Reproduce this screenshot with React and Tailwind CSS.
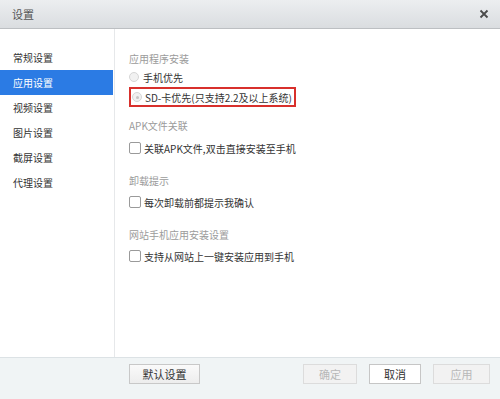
const menu = ["常规设置", "应用设置", "视频设置", "图片设置", "截屏设置", "代理设置"];

const Radio = ({ checked }) => (
    <span className="flex h-[10px] w-[10px] shrink-0 items-center justify-center rounded-full border border-[#d6d6d6] bg-[#f1f1f1]">
        {checked && <span className="h-[3px] w-[3px] rounded-full bg-[#c4c4c4]" />}
    </span>
);

const Checkbox = () => (
    <span className="h-[12px] w-[12px] shrink-0 rounded-[2px] border border-[#9a9a9a] bg-white" />
);

const Heading = ({ children, className = "" }) => (
    <div className={`h-[14px] text-[10px] leading-[14px] text-[#9b9b9b] ${className}`}>{children}</div>
);

const App = () => {
    return (
        <div
            className="flex h-[399px] w-[500px] flex-col bg-white text-[#333]"
            style={{ fontFamily: '"Noto Sans CJK SC", "Noto Sans", sans-serif' }}
        >
            {/* Title bar */}
            <div className="flex h-[29px] shrink-0 items-center justify-between border-b border-[#bcbfc2] bg-gradient-to-b from-[#eceef0] to-[#dadde0] pl-[12px] pr-[8px]">
                <span className="text-[11px] text-[#555]">设置</span>
                <svg width="10" height="10" viewBox="0 0 10 10" className="mr-[3px]">
                    <path d="M1.5 1.5 L8.5 8.5 M8.5 1.5 L1.5 8.5" stroke="#4a4a4a" strokeWidth="1.8" />
                </svg>
            </div>

            {/* Body */}
            <div className="flex flex-1">
                {/* Sidebar */}
                <div className="w-[115px] shrink-0 border-r border-[#e6e8ea] pt-[16px]">
                    {menu.map((item) => (
                        <div
                            key={item}
                            className={`flex h-[25px] items-center pl-[13px] text-[10px] ${
                                item === "应用设置" ? "mr-[1px] bg-[#2b7be4] text-white" : "text-[#333]"
                            }`}
                        >
                            {item}
                        </div>
                    ))}
                </div>

                {/* Content */}
                <div className="flex-1 pl-[14px] pt-[23px] text-[10px]">
                    <Heading>应用程序安装</Heading>
                    <div className="mt-[1px] flex h-[20px] items-center gap-[4px]">
                        <Radio />
                        <span>手机优先</span>
                    </div>
                    <div className="flex h-[20px] w-[167px] items-center gap-[3px] whitespace-nowrap border-2 border-[#d8302c] pl-[1px]">
                        <Radio checked />
                        <span>SD-卡优先(只支持2.2及以上系统)</span>
                    </div>

                    <Heading className="mt-[12px]">APK文件关联</Heading>
                    <div className="mt-[5px] flex h-[20px] items-center gap-[3px]">
                        <Checkbox />
                        <span>关联APK文件,双击直接安装至手机</span>
                    </div>

                    <Heading className="mt-[16px]">卸载提示</Heading>
                    <div className="mt-[4px] flex h-[20px] items-center gap-[3px]">
                        <Checkbox />
                        <span>每次卸载前都提示我确认</span>
                    </div>

                    <Heading className="mt-[16px]">网站手机应用安装设置</Heading>
                    <div className="mt-[4px] flex h-[20px] items-center gap-[3px]">
                        <Checkbox />
                        <span>支持从网站上一键安装应用到手机</span>
                    </div>
                </div>
            </div>

            {/* Footer */}
            <div className="flex h-[42px] shrink-0 items-start justify-between border-t border-[#dce2e5] bg-[#f0f4f5] pl-[129px] pr-[10px] pt-[6px] text-[11px]">
                <button className="h-[20px] w-[71px] border border-[#c8c8c8] bg-gradient-to-b from-[#fafafa] to-[#ededed] text-[#333]">
                    默认设置
                </button>
                <div className="flex gap-[12px]">
                    <button className="h-[20px] w-[54px] border border-[#dcdcdc] bg-[#f2f2f2] text-[#b8b8b8]">确定</button>
                    <button className="h-[20px] w-[52px] border border-[#c6c6c6] bg-white text-[#333]">取消</button>
                    <button className="h-[20px] w-[57px] border border-[#dcdcdc] bg-[#f2f2f2] text-[#b8b8b8]">应用</button>
                </div>
            </div>
        </div>
    );
};

export default App;
